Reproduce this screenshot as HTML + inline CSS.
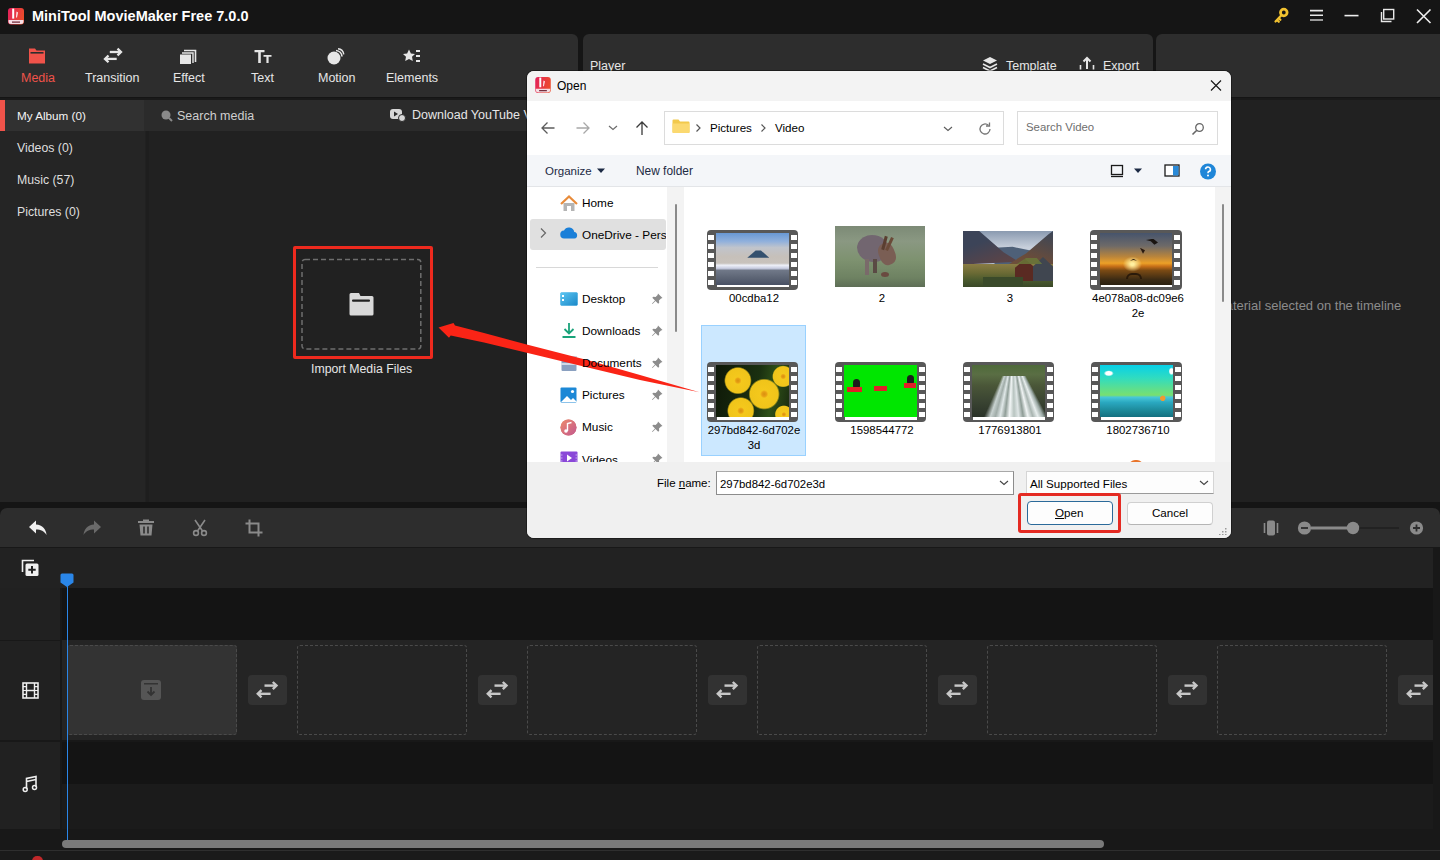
<!DOCTYPE html>
<html><head><meta charset="utf-8">
<style>
*{margin:0;padding:0;box-sizing:border-box}
html,body{width:1440px;height:860px;overflow:hidden;background:#151515;font-family:"Liberation Sans",sans-serif}
.a{position:absolute}
.t{position:absolute;white-space:nowrap;line-height:1}
svg{position:absolute;overflow:visible}
.tl{color:#e6e6e6;font-size:12.5px}
.clip{position:absolute;top:645px;width:170px;height:90px;border:1px dashed #4a4a4a;border-radius:3px}
.trb{position:absolute;top:675px;width:39.5px;height:29.5px;background:#323232;border-radius:4px}
.dt{position:absolute;white-space:nowrap;line-height:1;font-size:11.5px;color:#000}
.nav{position:absolute;left:582px;white-space:nowrap;line-height:1;font-size:11.8px;color:#000}
.film{position:absolute;width:91.5px;height:59.5px;background:#585858;border-radius:4px}
.film .img{position:absolute;left:9.7px;top:2.6px;width:72.5px;height:52px}
.film .wb{position:absolute;left:10.4px;top:54.7px;width:71.6px;height:2.6px;background:#fff}
.holes{position:absolute;top:4.5px;width:6px;height:50px;background:repeating-linear-gradient(#fff 0 4.8px,transparent 4.8px 9px)}
.lbl{position:absolute;width:110px;text-align:center;white-space:nowrap;line-height:15px;font-size:11.4px;color:#000}
</style></head><body>
<!-- TITLE BAR -->
<div class="a" style="left:0;top:0;width:1440px;height:34px;background:#151515"></div>
<svg style="left:8px;top:7.6px" width="16" height="16.5" viewBox="0 0 16 16.5">
<defs><linearGradient id="lg" x1="0" y1="0" x2="1" y2="0.3"><stop offset="0" stop-color="#e2205e"/><stop offset="1" stop-color="#ec4a2c"/></linearGradient></defs>
<rect x="0" y="0" width="16" height="16.5" rx="3" fill="url(#lg)"/>
<rect x="4.2" y="0.6" width="2" height="10" fill="#fff"/><path d="M8.5 3.5l1.5 1-1 5h-1z" fill="#fff" opacity=".9"/>
<path d="M0.5 12h15v1.5a2.5 2.5 0 0 1-2.5 2.5H3a2.5 2.5 0 0 1-2.5-2.5z" fill="#f4dde4"/><rect x="4" y="13.5" width="8" height="1.2" fill="#6a2030"/>
</svg>
<div class="t" style="left:32px;top:8.6px;font-size:14.5px;font-weight:bold;color:#fff">MiniTool MovieMaker Free 7.0.0</div>
<svg style="left:1272px;top:7px" width="18" height="18" viewBox="0 0 18 18">
<circle cx="11.8" cy="5.5" r="3.3" fill="none" stroke="#f2c230" stroke-width="2.8"/>
<path d="M9.6 8L3.5 14.5M5 13l1.8 1.8M6.8 11.2l1.6 1.6" stroke="#f2c230" stroke-width="2.2" stroke-linecap="round"/>
</svg>
<svg style="left:1308px;top:8px" width="18" height="16" viewBox="0 0 18 16">
<path d="M2 2.6h13M2 7.25h13" stroke="#e8e8e8" stroke-width="1.6"/><path d="M2 12h13" stroke="#bdbdbd" stroke-width="1.6"/>
</svg>
<svg style="left:1343px;top:8px" width="18" height="16" viewBox="0 0 18 16"><path d="M1.5 7.6h14" stroke="#eee" stroke-width="1.6"/></svg>
<svg style="left:1379px;top:7px" width="18" height="18" viewBox="0 0 18 18">
<rect x="4.7" y="2.5" width="10" height="9.5" fill="none" stroke="#e8e8e8" stroke-width="1.4"/>
<path d="M2.5 5v9.5h10" fill="none" stroke="#e8e8e8" stroke-width="1.4"/>
</svg>
<svg style="left:1415px;top:8px" width="18" height="18" viewBox="0 0 18 18"><path d="M2 1.5l13.5 13.5M15.5 1.5L2 15" stroke="#eee" stroke-width="1.6"/></svg>

<!-- TOOLBAR PANELS -->
<div class="a" style="left:0;top:34px;width:578px;height:63px;background:#2d2d2d;border-radius:0 6px 0 0"></div>
<div class="a" style="left:583px;top:34px;width:570px;height:63px;background:#2d2d2d;border-radius:6px 6px 0 0"></div>
<div class="a" style="left:1156px;top:34px;width:284px;height:63px;background:#2d2d2d;border-radius:6px 0 0 0"></div>
<div class="a" style="left:0;top:97.5px;width:1440px;height:2.5px;background:#1a1a1a"></div>

<!-- tab icons -->
<svg style="left:28px;top:47px" width="18" height="17" viewBox="0 0 18 17">
<path d="M1 1.5h6l1.5 2H17v13H1z" fill="#f0534a"/><rect x="2.5" y="5" width="13" height="1.6" fill="#2d2d2d"/>
</svg>
<svg style="left:100px;top:46px" width="24" height="20" viewBox="0 0 24 20">
<path d="M9.8 6H20.5" stroke="#e6e6e6" stroke-width="2.3"/><path d="M17.5 2.6L21 6l-3.5 3.4" fill="none" stroke="#e6e6e6" stroke-width="2.3"/>
<path d="M16.7 12.9H5.5" stroke="#e6e6e6" stroke-width="2.3"/><path d="M8.5 9.5L5 12.9l3.5 3.4" fill="none" stroke="#e6e6e6" stroke-width="2.3"/>
</svg>
<svg style="left:179px;top:47.5px" width="18" height="17" viewBox="0 0 18 17">
<path d="M5 2.5h11.5V14" fill="none" stroke="#e6e6e6" stroke-width="1.6"/>
<path d="M3 5h11v10" fill="none" stroke="#e6e6e6" stroke-width="1.4"/>
<rect x="1" y="6.5" width="11" height="9.5" fill="#e6e6e6"/>
</svg>
<svg style="left:254px;top:49px" width="18" height="15" viewBox="0 0 18 15"><path d="M0.5 1h10v2.2H6.8V14H4.2V3.2H0.5z" fill="#e6e6e6"/><path d="M9.5 6h8v1.8h-2.9V14h-2.2V7.8H9.5z" fill="#e6e6e6"/></svg>
<svg style="left:327px;top:48px" width="18" height="17" viewBox="0 0 18 17">
<circle cx="7" cy="10" r="6.5" fill="#e6e6e6"/>
<path d="M9 2.5a6.5 6.5 0 0 1 6 6" fill="none" stroke="#e6e6e6" stroke-width="1.6"/>
<path d="M11 0.8a6.5 6.5 0 0 1 5.8 5.5" fill="none" stroke="#e6e6e6" stroke-width="1.4"/>
</svg>
<svg style="left:402px;top:48px" width="20" height="16" viewBox="0 0 20 16">
<path d="M7 1.5l1.9 3.9 4.1.5-3 2.9.8 4.2L7 11l-3.8 2 .8-4.2-3-2.9 4.1-.5z" fill="#e6e6e6"/>
<path d="M14 3h4M14 8h4M14 13h4" stroke="#e6e6e6" stroke-width="1.8"/>
</svg>

<div class="t tl" style="left:21px;top:72px;color:#f0534a">Media</div>
<div class="t tl" style="left:85px;top:72px">Transition</div>
<div class="t tl" style="left:173px;top:72px">Effect</div>
<div class="t tl" style="left:251px;top:72px">Text</div>
<div class="t tl" style="left:318px;top:72px">Motion</div>
<div class="t tl" style="left:386px;top:72px">Elements</div>
<div class="t tl" style="left:590px;top:60px">Player</div>
<svg style="left:982px;top:56px" width="16" height="16" viewBox="0 0 16 16">
<path d="M8 1L15 4.5 8 8 1 4.5z" fill="#e6e6e6"/><path d="M1 8l7 3.5L15 8M1 11.5L8 15l7-3.5" fill="none" stroke="#e6e6e6" stroke-width="1.6"/>
</svg>
<div class="t tl" style="left:1006px;top:60px">Template</div>
<svg style="left:1079px;top:55px" width="16" height="16" viewBox="0 0 16 16">
<path d="M8 14V3M4.5 6.5L8 3l3.5 3.5" fill="none" stroke="#e6e6e6" stroke-width="2"/><path d="M1.5 10v4.5M14.5 10v4.5" stroke="#e6e6e6" stroke-width="1.6"/>
</svg>
<div class="t tl" style="left:1103px;top:60px">Export</div>

<!-- MEDIA LIBRARY -->
<div class="a" style="left:0;top:100px;width:145px;height:402px;background:#252525"></div>
<div class="a" style="left:0;top:100px;width:144px;height:31px;background:#313131"></div>
<div class="a" style="left:0;top:100px;width:5px;height:31px;background:#f0534a"></div>
<div class="a" style="left:145px;top:100px;width:433px;height:402px;background:#212121"></div>
<div class="a" style="left:144px;top:100px;width:434px;height:31px;background:#2b2b2b"></div>
<div class="a" style="left:146px;top:131px;width:3px;height:371px;background:#1e1e1e;opacity:.8"></div>
<div class="t" style="left:17px;top:110px;font-size:11.7px;color:#f4f4f4">My Album (0)</div>
<div class="t" style="left:17px;top:142px;font-size:12.3px;color:#dedede">Videos (0)</div>
<div class="t" style="left:17px;top:174px;font-size:12.3px;color:#dedede">Music (57)</div>
<div class="t" style="left:17px;top:206px;font-size:12.3px;color:#dedede">Pictures (0)</div>
<svg style="left:160px;top:109px" width="14" height="14" viewBox="0 0 14 14"><circle cx="6" cy="6" r="4.5" fill="#8a8a8a"/><path d="M9 9l3 3" stroke="#8a8a8a" stroke-width="2"/></svg>
<div class="t" style="left:177px;top:110px;font-size:12.5px;color:#cfcfcf">Search media</div>
<svg style="left:390px;top:108px" width="16" height="14" viewBox="0 0 16 14"><rect x="0" y="1" width="12" height="10" rx="3" fill="#d8d8d8"/><path d="M4 3.5l4 2.5-4 2.5z" fill="#2a2a2a"/><circle cx="12" cy="10" r="3.5" fill="#d8d8d8" stroke="#2a2a2a" stroke-width="1"/></svg>
<div class="t" style="left:412px;top:109px;font-size:12.5px;color:#e6e6e6">Download YouTube Videos</div>

<!-- import box -->
<div class="a" style="left:293px;top:246px;width:140px;height:113px;border:3px solid #ee2a1e;border-radius:2px"></div>
<svg style="left:300px;top:258px" width="124" height="94" viewBox="0 0 124 94"><rect x="2" y="1.5" width="118.8" height="89.6" rx="3" fill="none" stroke="#6e6e6e" stroke-width="1.5" stroke-dasharray="5 3"/></svg>
<svg style="left:348px;top:292px" width="26" height="25" viewBox="0 0 26 25">
<path d="M1.5 2.5a1.5 1.5 0 0 1 1.5-1.5h8l1.5 3H24a1.5 1.5 0 0 1 1.5 1.5V22a1.5 1.5 0 0 1-1.5 1.5H3A1.5 1.5 0 0 1 1.5 22z" fill="#d9d9d9"/>
<rect x="4" y="7.5" width="18" height="2.2" rx="1" fill="#222"/>
</svg>
<div class="t" style="left:311px;top:363px;font-size:12.3px;color:#e6e6e6">Import Media Files</div>

<!-- PLAYER AREA -->
<div class="a" style="left:578px;top:100px;width:862px;height:402px;background:#212121"></div>
<div class="t" style="left:1194.6px;top:299px;font-size:13px;color:#8c8c8c">No material selected on the timeline</div>

<!-- TIMELINE -->
<div class="a" style="left:0;top:502px;width:1440px;height:6px;background:#151515"></div>
<div class="a" style="left:0;top:508px;width:1440px;height:39px;background:#2d2d2d;border-radius:7px 7px 0 0"></div>
<div class="a" style="left:0;top:547px;width:1440px;height:313px;background:#181818"></div>
<!-- tl toolbar icons -->
<svg style="left:28px;top:519px" width="20" height="18" viewBox="0 0 20 18">
<path d="M8 1.5L1 8l7 6.5V10.5c5 0 8 1.5 10.5 5.5C18 10 14.5 6 8 5.5z" fill="#f0f0f0"/>
</svg>
<svg style="left:82px;top:519px" width="20" height="18" viewBox="0 0 20 18">
<path d="M12 1.5L19 8l-7 6.5V10.5c-5 0-8 1.5-10.5 5.5C2 10 5.5 6 12 5.5z" fill="#6a6a6a"/>
</svg>
<svg style="left:137px;top:519px" width="18" height="18" viewBox="0 0 18 18">
<rect x="1" y="2" width="16" height="2" fill="#8a8a8a"/><rect x="6" y="0.5" width="6" height="2" fill="#8a8a8a"/>
<path d="M2.5 5.5h13l-1 11h-11z" fill="#8a8a8a"/><path d="M7 7.5v7M11 7.5v7" stroke="#2d2d2d" stroke-width="1.6"/>
</svg>
<svg style="left:191px;top:519px" width="18" height="18" viewBox="0 0 18 18">
<path d="M4 1l7.5 11M14 1L6.5 12" stroke="#8a8a8a" stroke-width="1.6"/><circle cx="5" cy="14" r="2.4" fill="none" stroke="#8a8a8a" stroke-width="1.6"/><circle cx="13" cy="14" r="2.4" fill="none" stroke="#8a8a8a" stroke-width="1.6"/>
</svg>
<svg style="left:245px;top:519px" width="18" height="18" viewBox="0 0 18 18">
<path d="M4.5 0.5v13h13M0.5 4.5h13v13" fill="none" stroke="#8a8a8a" stroke-width="2"/>
</svg>
<!-- zoom -->
<svg style="left:1263px;top:519px" width="16" height="18" viewBox="0 0 16 18">
<rect x="4" y="1.5" width="8" height="15" rx="2" fill="#8a8a8a"/><path d="M1.5 4v10M14.5 4v10" stroke="#8a8a8a" stroke-width="1.6"/>
</svg>
<svg style="left:1296px;top:519px" width="130" height="18" viewBox="0 0 130 18">
<circle cx="8.5" cy="9" r="6.6" fill="#8a8a8a"/><path d="M5 9h7" stroke="#2d2d2d" stroke-width="1.8"/>
<path d="M15 9h42" stroke="#8a8a8a" stroke-width="3"/><path d="M57 9h46" stroke="#222" stroke-width="2"/>
<circle cx="57" cy="9" r="6.2" fill="#8a8a8a"/>
<circle cx="120.5" cy="9" r="6.6" fill="#8a8a8a"/><path d="M117 9h7M120.5 5.5v7" stroke="#2d2d2d" stroke-width="1.8"/>
</svg>

<!-- ruler row -->
<div class="a" style="left:0;top:548px;width:1433px;height:40px;background:#222"></div>
<svg style="left:21px;top:559px" width="19" height="18" viewBox="0 0 19 18">
<path d="M1.5 13V1.5H13" fill="none" stroke="#f0f0f0" stroke-width="1.6"/>
<rect x="4.5" y="4.5" width="13" height="12.5" rx="1.5" fill="#f0f0f0"/>
<path d="M11 7v7.5M7.3 10.75h7.4" stroke="#222" stroke-width="2"/>
</svg>
<!-- tracks -->
<div class="a" style="left:0;top:588px;width:60px;height:52px;background:#212121"></div>
<div class="a" style="left:62px;top:588px;width:1371px;height:52px;background:#141414"></div>
<div class="a" style="left:0;top:641px;width:60px;height:99px;background:#212121"></div>
<div class="a" style="left:62px;top:640px;width:1371px;height:100px;background:#242424"></div>
<div class="a" style="left:0;top:742px;width:60px;height:87px;background:#212121"></div>
<div class="a" style="left:62px;top:742px;width:1371px;height:42px;background:#141414"></div>
<div class="a" style="left:62px;top:784px;width:1371px;height:45px;background:#1b1b1b"></div>
<svg style="left:22px;top:682px" width="17" height="17" viewBox="0 0 17 17">
<rect x="1" y="1" width="15" height="15" fill="none" stroke="#eee" stroke-width="1.6"/>
<path d="M4.5 1v15M12.5 1v15M4.5 8.5h8" stroke="#eee" stroke-width="1.4"/>
<path d="M1 4.7h3.5M1 8.5h3.5M1 12.3h3.5M12.5 4.7H16M12.5 8.5H16M12.5 12.3H16" stroke="#eee" stroke-width="1.2"/>
</svg>
<svg style="left:22px;top:775px" width="16" height="18" viewBox="0 0 16 18">
<path d="M4.5 14V3.5L14 1.5V12M4.5 6.5L14 4.5" fill="none" stroke="#eee" stroke-width="1.6"/>
<circle cx="3.2" cy="14.5" r="2" fill="none" stroke="#eee" stroke-width="1.5"/><circle cx="12.5" cy="12.5" r="2" fill="none" stroke="#eee" stroke-width="1.5"/>
</svg>
<!-- clips -->
<div class="clip" style="left:67px;background:#333"></div>
<svg style="left:141px;top:680px" width="20" height="20" viewBox="0 0 20 20">
<rect x="0" y="0" width="20" height="20" rx="3" fill="#555"/><rect x="3" y="3" width="14" height="1.5" fill="#333"/>
<path d="M10 7v8M6.5 11.5L10 15l3.5-3.5" fill="none" stroke="#333" stroke-width="1.8"/>
</svg>
<div class="clip" style="left:297px"></div>
<div class="clip" style="left:527px"></div>
<div class="clip" style="left:757px"></div>
<div class="clip" style="left:987px"></div>
<div class="clip" style="left:1217px"></div>
<div class="trb" style="left:247.5px"></div><svg style="left:255.5px;top:679px" width="24" height="20" viewBox="0 0 24 20"><path d="M8.5 6.6H20" stroke="#c8c8c8" stroke-width="2.4"/><path d="M16.8 3L20.5 6.6l-3.7 3.6" fill="none" stroke="#c8c8c8" stroke-width="2.4"/><path d="M14.6 14.8H2.5" stroke="#c8c8c8" stroke-width="2.4"/><path d="M5.5 11.2L1.8 14.8l3.7 3.6" fill="none" stroke="#c8c8c8" stroke-width="2.4"/></svg>
<div class="trb" style="left:477.5px"></div><svg style="left:485.5px;top:679px" width="24" height="20" viewBox="0 0 24 20"><path d="M8.5 6.6H20" stroke="#c8c8c8" stroke-width="2.4"/><path d="M16.8 3L20.5 6.6l-3.7 3.6" fill="none" stroke="#c8c8c8" stroke-width="2.4"/><path d="M14.6 14.8H2.5" stroke="#c8c8c8" stroke-width="2.4"/><path d="M5.5 11.2L1.8 14.8l3.7 3.6" fill="none" stroke="#c8c8c8" stroke-width="2.4"/></svg>
<div class="trb" style="left:707.5px"></div><svg style="left:715.5px;top:679px" width="24" height="20" viewBox="0 0 24 20"><path d="M8.5 6.6H20" stroke="#c8c8c8" stroke-width="2.4"/><path d="M16.8 3L20.5 6.6l-3.7 3.6" fill="none" stroke="#c8c8c8" stroke-width="2.4"/><path d="M14.6 14.8H2.5" stroke="#c8c8c8" stroke-width="2.4"/><path d="M5.5 11.2L1.8 14.8l3.7 3.6" fill="none" stroke="#c8c8c8" stroke-width="2.4"/></svg>
<div class="trb" style="left:937.5px"></div><svg style="left:945.5px;top:679px" width="24" height="20" viewBox="0 0 24 20"><path d="M8.5 6.6H20" stroke="#c8c8c8" stroke-width="2.4"/><path d="M16.8 3L20.5 6.6l-3.7 3.6" fill="none" stroke="#c8c8c8" stroke-width="2.4"/><path d="M14.6 14.8H2.5" stroke="#c8c8c8" stroke-width="2.4"/><path d="M5.5 11.2L1.8 14.8l3.7 3.6" fill="none" stroke="#c8c8c8" stroke-width="2.4"/></svg>
<div class="trb" style="left:1167.5px"></div><svg style="left:1175.5px;top:679px" width="24" height="20" viewBox="0 0 24 20"><path d="M8.5 6.6H20" stroke="#c8c8c8" stroke-width="2.4"/><path d="M16.8 3L20.5 6.6l-3.7 3.6" fill="none" stroke="#c8c8c8" stroke-width="2.4"/><path d="M14.6 14.8H2.5" stroke="#c8c8c8" stroke-width="2.4"/><path d="M5.5 11.2L1.8 14.8l3.7 3.6" fill="none" stroke="#c8c8c8" stroke-width="2.4"/></svg>
<div class="trb" style="left:1397.5px"></div><svg style="left:1405.5px;top:679px" width="24" height="20" viewBox="0 0 24 20"><path d="M8.5 6.6H20" stroke="#c8c8c8" stroke-width="2.4"/><path d="M16.8 3L20.5 6.6l-3.7 3.6" fill="none" stroke="#c8c8c8" stroke-width="2.4"/><path d="M14.6 14.8H2.5" stroke="#c8c8c8" stroke-width="2.4"/><path d="M5.5 11.2L1.8 14.8l3.7 3.6" fill="none" stroke="#c8c8c8" stroke-width="2.4"/></svg>
<div class="a" style="left:1433px;top:548px;width:7px;height:290px;background:#181818"></div>
<!-- scrollbar -->
<div class="a" style="left:62px;top:840px;width:1042px;height:8px;background:#7a7a7a;border-radius:4px"></div>
<div class="a" style="left:0;top:850px;width:1440px;height:1px;background:#2e2e2e"></div>
<div class="a" style="left:0;top:851px;width:1440px;height:9px;background:#1a1a1a"></div>
<div class="a" style="left:32px;top:856px;width:11px;height:10px;border-radius:6px;background:#c0282a"></div>
<!-- playhead -->
<div class="a" style="left:66.6px;top:580px;width:1.3px;height:260px;background:#2a86e8"></div>
<svg style="left:60px;top:573px" width="15" height="15" viewBox="0 0 15 15"><path d="M0.5 2a1.5 1.5 0 0 1 1.5-1.5h10A1.5 1.5 0 0 1 13.5 2V9.5L7 14 0.5 9.5z" fill="#2a86e8"/></svg>
<!-- ============ DIALOG ============ -->
<div class="a" style="left:526px;top:70px;width:706px;height:469px;border-radius:8px;background:rgba(0,0,0,.35)"></div>
<div class="a" style="left:527px;top:71px;width:704px;height:467px;background:#f0f0f0;border-radius:7px;overflow:hidden">
</div>
<div class="a" style="left:527px;top:71px;width:704px;height:30px;background:#f3f3f3;border-radius:7px 7px 0 0"></div>
<svg style="left:535px;top:76.8px" width="16" height="16" viewBox="0 0 16 16.5">
<rect x="0" y="0" width="16" height="16.5" rx="3" fill="url(#lg)"/>
<rect x="4.2" y="0.6" width="2" height="10" fill="#fff"/><path d="M8.5 3.5l1.5 1-1 5h-1z" fill="#fff" opacity=".9"/>
<path d="M0.5 12h15v1.5a2.5 2.5 0 0 1-2.5 2.5H3a2.5 2.5 0 0 1-2.5-2.5z" fill="#f4dde4"/><rect x="4" y="13.5" width="8" height="1.2" fill="#6a2030"/>
</svg>
<div class="dt" style="left:557px;top:79.6px;font-size:12px">Open</div>
<svg style="left:1209px;top:78px" width="14" height="14" viewBox="0 0 14 14"><path d="M2 2.5l10 10M12 2.5l-10 10" stroke="#1a1a1a" stroke-width="1.2"/></svg>

<!-- address row -->
<div class="a" style="left:527px;top:101px;width:704px;height:54px;background:#fff"></div>
<svg style="left:540px;top:120px" width="16" height="16" viewBox="0 0 16 16"><path d="M14.5 8H2M7.5 2.5L2 8l5.5 5.5" fill="none" stroke="#5c5c5c" stroke-width="1.3"/></svg>
<svg style="left:575px;top:120px" width="16" height="16" viewBox="0 0 16 16"><path d="M1.5 8H14M8.5 2.5L14 8l-5.5 5.5" fill="none" stroke="#a8a8a8" stroke-width="1.3"/></svg>
<svg style="left:607px;top:123px" width="12" height="10" viewBox="0 0 12 10"><path d="M2 3l4 3.5L10 3" fill="none" stroke="#6c6c6c" stroke-width="1.2"/></svg>
<svg style="left:634px;top:120px" width="16" height="16" viewBox="0 0 16 16"><path d="M8 15V2M2.5 7.5L8 2l5.5 5.5" fill="none" stroke="#3a3a3a" stroke-width="1.3"/></svg>
<div class="a" style="left:664px;top:111px;width:340px;height:34px;border:1px solid #dcdcdc;background:#fff"></div>
<svg style="left:672px;top:119px" width="18" height="15" viewBox="0 0 18 15">
<path d="M0.5 1.5a1 1 0 0 1 1-1h5l1.5 2h8.5a1 1 0 0 1 1 1V13a1 1 0 0 1-1 1h-15a1 1 0 0 1-1-1z" fill="#f2c94c"/>
<path d="M0.5 4.5h17V13a1 1 0 0 1-1 1h-15a1 1 0 0 1-1-1z" fill="#fbd970"/>
</svg>
<svg style="left:694px;top:123px" width="8" height="10" viewBox="0 0 8 10"><path d="M2.5 1.5L6 5l-3.5 3.5" fill="none" stroke="#555" stroke-width="1.2"/></svg>
<div class="dt" style="left:710px;top:121.8px;font-size:11.6px">Pictures</div>
<svg style="left:759px;top:123px" width="8" height="10" viewBox="0 0 8 10"><path d="M2.5 1.5L6 5l-3.5 3.5" fill="none" stroke="#555" stroke-width="1.2"/></svg>
<div class="dt" style="left:775px;top:121.8px;font-size:11.6px">Video</div>
<svg style="left:942px;top:124px" width="12" height="10" viewBox="0 0 12 10"><path d="M2 3l4 3.5L10 3" fill="none" stroke="#5c5c5c" stroke-width="1.1"/></svg>
<svg style="left:977px;top:121px" width="16" height="16" viewBox="0 0 16 16"><path d="M13 8a5 5 0 1 1-1.6-3.7" fill="none" stroke="#777" stroke-width="1.3"/><path d="M12.5 1.5v3.5H9" fill="none" stroke="#777" stroke-width="1.3"/></svg>
<div class="a" style="left:1017px;top:111px;width:201px;height:34px;border:1px solid #dcdcdc;background:#fff"></div>
<div class="dt" style="left:1026px;top:122.3px;font-size:11.4px;color:#6e6e6e">Search Video</div>
<svg style="left:1191px;top:122px" width="14" height="14" viewBox="0 0 14 14"><circle cx="8.5" cy="5.5" r="3.8" fill="none" stroke="#666" stroke-width="1.3"/><path d="M5.8 8.2L1.5 12.5" stroke="#666" stroke-width="1.6"/></svg>

<!-- command bar -->
<div class="a" style="left:527px;top:155px;width:704px;height:31px;background:#f4f6f9"></div>
<div class="a" style="left:527px;top:186px;width:704px;height:1px;background:#e3e5e8"></div>
<div class="dt" style="left:545px;top:165.8px;font-size:11.5px;color:#1c2a44">Organize</div>
<svg style="left:596px;top:167px" width="10" height="8" viewBox="0 0 10 8"><path d="M1 1.5h8L5 6z" fill="#1c2a44"/></svg>
<div class="dt" style="left:636px;top:165.8px;font-size:11.9px;color:#1c2a44">New folder</div>
<svg style="left:1110px;top:164px" width="16" height="14" viewBox="0 0 16 14"><rect x="1.5" y="1.5" width="11" height="9" fill="none" stroke="#1a1a1a" stroke-width="1.3"/><path d="M1 12.5h12" stroke="#1a1a1a" stroke-width="1.3"/></svg>
<svg style="left:1133px;top:167px" width="10" height="8" viewBox="0 0 10 8"><path d="M1 1.5h8L5 6z" fill="#1c2a44"/></svg>
<svg style="left:1164px;top:164px" width="16" height="14" viewBox="0 0 16 14"><rect x="1" y="1" width="14" height="11" fill="#fff" stroke="#1a1a1a" stroke-width="1.3"/><rect x="9" y="2" width="5.5" height="9.5" fill="#2a8ad8"/></svg>
<svg style="left:1199px;top:163px" width="18" height="18" viewBox="0 0 18 18"><circle cx="9" cy="8.5" r="8" fill="#1f86d8"/><path d="M6.6 6.3a2.4 2.4 0 1 1 3.2 2.3c-.7.3-.8.7-.8 1.6" fill="none" stroke="#fff" stroke-width="1.6"/><circle cx="9" cy="12.6" r="1" fill="#fff"/></svg>

<!-- nav pane -->
<div class="a" style="left:527px;top:187px;width:140px;height:275px;background:#fff"></div>
<div class="a" style="left:667px;top:187px;width:17px;height:275px;background:#f3f3f3"></div>
<div class="a" style="left:674.5px;top:204px;width:2px;height:128px;background:#8a8a8a;border-radius:1px"></div>
<div class="a" style="left:529.5px;top:219px;width:136px;height:31px;background:#e0e0e0;border-radius:3px"></div>
<svg style="left:539px;top:227px" width="8" height="12" viewBox="0 0 8 12"><path d="M2 1.5L6.5 6 2 10.5" fill="none" stroke="#666" stroke-width="1.2"/></svg>
<div class="a" style="left:536px;top:267px;width:122px;height:1px;background:#d8d8d8"></div>
<div class="a" style="left:684px;top:187px;width:531px;height:275px;background:#fff"></div>

<!-- nav icons -->
<svg style="left:560px;top:195px" width="18" height="17" viewBox="0 0 18 17">
<path d="M3.5 8v8h11V8" fill="#b4b4b4"/><path d="M1 9L9 1.5 17 9" fill="none" stroke="#e88b3a" stroke-width="2.2"/>
<rect x="7" y="11" width="4" height="5" fill="#fff"/>
</svg>
<svg style="left:560px;top:226px" width="18" height="13" viewBox="0 0 18 13">
<path d="M4.5 12.5a4 4 0 0 1-.5-8 5.5 5.5 0 0 1 10.3 1.5 3.3 3.3 0 0 1 .2 6.5z" fill="#1a7fd8"/>
</svg>
<svg style="left:560px;top:292px" width="18" height="14" viewBox="0 0 18 14">
<rect x="0.5" y="0.5" width="17" height="13" rx="1" fill="#2ea6e0"/><rect x="0.5" y="0.5" width="17" height="13" rx="1" fill="url(#dg)"/>
<defs><linearGradient id="dg" x1="0" y1="0" x2="1" y2="1"><stop offset="0" stop-color="#5cc6f2"/><stop offset="1" stop-color="#1a88c8"/></linearGradient></defs>
<rect x="2" y="3" width="2" height="2" fill="#fff"/><rect x="2" y="7" width="2" height="2" fill="#fff"/>
</svg>
<svg style="left:560px;top:322px" width="18" height="17" viewBox="0 0 18 17">
<path d="M9 1v10M4.5 7L9 11.5 13.5 7" fill="none" stroke="#1aa37a" stroke-width="1.8"/><path d="M2.5 15h13" stroke="#1aa37a" stroke-width="2"/>
</svg>
<svg style="left:561px;top:355px" width="16" height="17" viewBox="0 0 16 17">
<rect x="0.5" y="1" width="15" height="15" rx="1" fill="#8aa0c0"/><rect x="0.5" y="1" width="15" height="5" fill="#c8d2e0"/><path d="M0.5 9h15" stroke="#fff" stroke-width="1.2"/>
</svg>
<svg style="left:560px;top:387px" width="18" height="16" viewBox="0 0 18 16">
<rect x="0.5" y="0.5" width="16" height="15" rx="1" fill="#1c88d6"/><path d="M1 15l6-6 4 4 2-2 4 4z" fill="#fff"/><circle cx="12.5" cy="4.5" r="1.6" fill="#fff"/>
</svg>
<svg style="left:560px;top:419px" width="17" height="17" viewBox="0 0 17 17">
<circle cx="8.5" cy="8.5" r="8" fill="#d9786a"/><circle cx="8.5" cy="8.5" r="8" fill="url(#mg)"/>
<defs><linearGradient id="mg" x1="0" y1="0" x2="1" y2="1"><stop offset="0" stop-color="#ee8a6a"/><stop offset="1" stop-color="#c25890"/></linearGradient></defs>
<path d="M7.5 12V4.5l4-1" fill="none" stroke="#fff" stroke-width="1.4"/><circle cx="6" cy="12" r="1.8" fill="#fff"/>
</svg>
<svg style="left:560px;top:451px" width="18" height="14" viewBox="0 0 18 14">
<rect x="0.5" y="0.5" width="17" height="13" rx="1" fill="#8a48d8"/><path d="M7 3.5l5 3.5-5 3.5z" fill="#fff"/>
<path d="M0.5 4h2M0.5 7h2M0.5 10h2M15.5 4h2M15.5 7h2M15.5 10h2" stroke="#c8a8f0" stroke-width="1.2"/>
</svg>
<!-- ARROW -->
<svg style="left:0;top:0" width="1440" height="860" viewBox="0 0 1440 860">
<path d="M438.5 327.6 L453.5 323 L455 325.5 L484 333.1 L526.7 344.4 L590 360.8 L640 375 L699.5 392.2 L640 380 L590 367.9 L526.7 352.8 L484 342.6 L450.7 335.6 L449 337.7 Z" fill="#fa2416"/>
</svg>
<div class="nav" style="top:197.5px">Home</div>
<div class="nav" style="top:229.5px;width:84px;overflow:hidden">OneDrive - Personal</div>
<div class="nav" style="top:293.5px">Desktop</div>
<div class="nav" style="top:325.5px">Downloads</div>
<div class="nav" style="top:357.5px">Documents</div>
<div class="nav" style="top:389.5px">Pictures</div>
<div class="nav" style="top:421.5px">Music</div>
<div class="nav" style="top:454.5px">Videos</div>
<svg style="left:651px;top:292px" width="13" height="13" viewBox="0 0 13 13"><path d="M7 1.5l4.5 4.5-1.5.5-2 2 .2 2.3-1 1L4.5 9 1.5 12 1 11.5 4 8.5 1.3 5.8l1-1 2.3.2 2-2z" fill="#8c8c8c"/></svg>
<svg style="left:651px;top:324px" width="13" height="13" viewBox="0 0 13 13"><path d="M7 1.5l4.5 4.5-1.5.5-2 2 .2 2.3-1 1L4.5 9 1.5 12 1 11.5 4 8.5 1.3 5.8l1-1 2.3.2 2-2z" fill="#8c8c8c"/></svg>
<svg style="left:651px;top:356px" width="13" height="13" viewBox="0 0 13 13"><path d="M7 1.5l4.5 4.5-1.5.5-2 2 .2 2.3-1 1L4.5 9 1.5 12 1 11.5 4 8.5 1.3 5.8l1-1 2.3.2 2-2z" fill="#8c8c8c"/></svg>
<svg style="left:651px;top:388px" width="13" height="13" viewBox="0 0 13 13"><path d="M7 1.5l4.5 4.5-1.5.5-2 2 .2 2.3-1 1L4.5 9 1.5 12 1 11.5 4 8.5 1.3 5.8l1-1 2.3.2 2-2z" fill="#8c8c8c"/></svg>
<svg style="left:651px;top:420px" width="13" height="13" viewBox="0 0 13 13"><path d="M7 1.5l4.5 4.5-1.5.5-2 2 .2 2.3-1 1L4.5 9 1.5 12 1 11.5 4 8.5 1.3 5.8l1-1 2.3.2 2-2z" fill="#8c8c8c"/></svg>
<svg style="left:651px;top:452px" width="13" height="13" viewBox="0 0 13 13"><path d="M7 1.5l4.5 4.5-1.5.5-2 2 .2 2.3-1 1L4.5 9 1.5 12 1 11.5 4 8.5 1.3 5.8l1-1 2.3.2 2-2z" fill="#8c8c8c"/></svg>


<!-- content -->
<div class="a" style="left:684px;top:187px;width:531px;height:275px;overflow:hidden">
<div class="a" style="left:17px;top:138px;width:105px;height:131px;background:#cce8ff;border:1px solid #99d1ff"></div>
<div class="film" style="left:22.6px;top:43.2px"><div class="holes" style="left:1.2px"></div><div class="holes" style="left:84.2px"></div><div class="img" style="background:linear-gradient(#6898d4 0%,#90b0dc 16%,#c0c4cc 28%,#c6c0ba 45%,#c8c2bc 58%,#eef0f8 62%,#c8cce0 68%,#707888 72%,#5e6676 85%,#485064 100%)"><div class="a" style="left:31px;top:17px;width:22px;height:8px;background:#34506e;clip-path:polygon(0 100%,38% 8%,62% 8%,100% 100%)"></div></div><div class="wb"></div></div>
<div class="a" style="left:151.3px;top:39px;width:89.5px;height:60.7px;overflow:hidden;background:linear-gradient(#7c8a76 0%,#8a9882 25%,#7e9270 55%,#6e8262 85%,#5e6e56)"><div class="a" style="left:22px;top:9px;width:32px;height:27px;border-radius:50%;background:#726670;transform:rotate(10deg)"></div><div class="a" style="left:44px;top:17px;width:16px;height:22px;border-radius:40%;background:#7a5e54;transform:rotate(-20deg)"></div><div class="a" style="left:48px;top:10px;width:3px;height:14px;background:#5a3e30;transform:rotate(15deg)"></div><div class="a" style="left:53px;top:11px;width:3px;height:14px;background:#6a4a38;transform:rotate(25deg)"></div><div class="a" style="left:30px;top:33px;width:4px;height:16px;background:#7a6a6a"></div><div class="a" style="left:38px;top:33px;width:4px;height:14px;background:#5a4a44"></div><div class="a" style="left:46px;top:46px;width:8px;height:5px;border-radius:50%;background:#6a4a40"></div></div>
<div class="a" style="left:279px;top:44px;width:90px;height:56px;overflow:hidden;background:linear-gradient(#8a9ab0,#c8d0dc 30%,#b0bccc 50%)"><div class="a" style="left:0;top:0;width:90px;height:56px;background:#4e6078;clip-path:polygon(35% 30%,55% 28%,75% 35%,75% 60%,35% 60%)"></div><div class="a" style="left:0;top:0;width:90px;height:56px;background:linear-gradient(160deg,#3c4458 20%,#5a4448 50%,#6a4a3e);clip-path:polygon(0 0,18% 0,45% 38%,62% 55%,0 60%)"></div><div class="a" style="left:0;top:0;width:90px;height:56px;background:linear-gradient(200deg,#3a4658,#6a4c3a 40%,#7a5a3a);clip-path:polygon(100% 0,100% 65%,48% 62%,70% 40%,95% 6%)"></div><div class="a" style="left:0;top:33px;width:90px;height:23px;background:linear-gradient(#8a7c44,#6a6a34 40%,#4a5a2e 70%,#3a4828)"></div><div class="a" style="left:52px;top:28px;width:20px;height:22px;background:#5a2a22;clip-path:polygon(0 40%,50% 0,100% 40%,100% 100%,0 100%)"></div><div class="a" style="left:70px;top:26px;width:20px;height:24px;background:#404650;clip-path:polygon(0 40%,50% 0,100% 40%,100% 100%,0 100%)"></div><div class="a" style="left:54px;top:27px;width:36px;height:6px;background:#6a7a3a;opacity:.8;clip-path:polygon(0 100%,25% 0,55% 0,70% 100%)"></div><div class="a" style="left:20px;top:46px;width:40px;height:10px;background:#3a4a2a"></div></div>
<div class="film" style="left:406.3px;top:43.2px"><div class="holes" style="left:1.2px"></div><div class="holes" style="left:84.2px"></div><div class="img" style="background:radial-gradient(ellipse 10px 8px at 45% 60%,#fff0a0 15%,transparent 95%),linear-gradient(#46546c 0%,#6e6a68 25%,#b8843c 45%,#eca028 58%,#c87018 64%,#7a4a14 72%,#3a2a14 90%,#2a2010 100%)"><div class="a" style="left:46px;top:6px;width:12px;height:6px;background:#1a1410;clip-path:polygon(0 20%,60% 0,100% 60%,70% 100%,40% 40%)"></div><div class="a" style="left:40px;top:15px;width:5px;height:6px;background:#2a1a10;clip-path:polygon(0 0,100% 40%,60% 100%)"></div><div class="a" style="left:30px;top:26px;width:7px;height:4px;background:#3a2a14;clip-path:polygon(0 50%,50% 0,100% 50%,50% 30%)"></div><div class="a" style="left:26px;top:40px;width:16px;height:6px;border-radius:8px 8px 0 0;border:2px solid #2a1a0a;border-bottom:0"></div></div><div class="wb"></div></div>
<div class="film" style="left:22.6px;top:175.3px"><div class="holes" style="left:1.2px"></div><div class="holes" style="left:84.2px"></div><div class="img" style="background:radial-gradient(circle 15px at 30% 30%,#d89010 0,#e8a014 14%,#f4c81c 24%,#f0c41a 82%,transparent 92%),radial-gradient(circle 17px at 66% 56%,#d89010 0,#e8a014 14%,#f4c81c 24%,#f0c41a 82%,transparent 92%),radial-gradient(circle 15px at 34% 88%,#d89010 0,#e8a014 14%,#f4c81c 24%,#f0c41a 82%,transparent 92%),radial-gradient(circle 12px at 92% 22%,#d89010 0,#e8a014 14%,#f4c81c 24%,#f0c41a 82%,transparent 92%),radial-gradient(circle 10px at 93% 95%,#d89010 0,#e8a014 14%,#f4c81c 24%,#f0c41a 82%,transparent 92%),linear-gradient(100deg,#0e1808,#1a3010 55%,#2e5018 75%,#1a2a10)"></div><div class="wb"></div></div>
<div class="film" style="left:150.6px;top:175.3px"><div class="holes" style="left:1.2px"></div><div class="holes" style="left:84.2px"></div><div class="img" style="background:#00e600"><div class="a" style="left:9px;top:14px;width:7px;height:8px;border-radius:4px 4px 1px 1px;background:#1c1c1c"></div><div class="a" style="left:3px;top:22px;width:15px;height:5px;background:#e02028"></div><div class="a" style="left:30px;top:21.5px;width:13px;height:4.5px;background:#e02028"></div><div class="a" style="left:63px;top:10px;width:7px;height:8px;border-radius:4px 4px 1px 1px;background:#1c1c1c"></div><div class="a" style="left:60px;top:18.5px;width:12px;height:4.5px;background:#e02028"></div></div><div class="wb"></div></div>
<div class="film" style="left:278.6px;top:175.3px"><div class="holes" style="left:1.2px"></div><div class="holes" style="left:84.2px"></div><div class="img" style="background:conic-gradient(from 152deg at 56% -60%,transparent 0deg,#9aa8a4 3deg,#e8eeee 7deg,#a8b4b0 11deg,#f0f4f4 15deg,#8e9c96 19deg,#dfe6e6 23deg,#b8c4c0 27deg,#f2f6f6 31deg,#909e98 35deg,#e0e8e8 39deg,#a0aca8 43deg,#c8d2d0 47deg,transparent 52deg) 0 11px/100% 41px no-repeat,linear-gradient(#4e6a3a 0%,#5a6e44 18%,#4a5638 40%,#3a4432 70%,#2a3228 100%)"></div><div class="wb"></div></div>
<div class="film" style="left:406.6px;top:175.3px"><div class="holes" style="left:1.2px"></div><div class="holes" style="left:84.2px"></div><div class="img" style="background:radial-gradient(ellipse 3px 3px at 86% 64%,#f09a30 80%,transparent 100%),radial-gradient(ellipse 5px 3px at 12% 16%,#ffffff 60%,transparent 100%),radial-gradient(ellipse 3px 4px at 98% 12%,#ffffff 60%,transparent 100%),linear-gradient(#08d0e8 0%,#30dcc0 25%,#78e070 58%,#48c8d8 62%,#2aa8c0 72%,#1c8898 88%,#147080 100%)"></div><div class="wb"></div></div>
<div class="lbl" style="left:15px;top:104.4px">00cdba12</div>
<div class="lbl" style="left:143px;top:104.4px">2</div>
<div class="lbl" style="left:271px;top:104.4px">3</div>
<div class="lbl" style="left:399px;top:104.4px">4e078a08-dc09e6<br>2e</div>
<div class="lbl" style="left:15px;top:235.9px">297bd842-6d702e<br>3d</div>
<div class="lbl" style="left:143px;top:235.9px">1598544772</div>
<div class="lbl" style="left:271px;top:235.9px">1776913801</div>
<div class="lbl" style="left:399px;top:235.9px">1802736710</div>
<div class="a" style="left:445px;top:273px;width:14px;height:6px;border-radius:7px 7px 0 0;background:#e8742a"></div>
</div>
<div class="a" style="left:1215px;top:187px;width:16px;height:275px;background:#f3f3f3"></div>
<div class="a" style="left:1221.5px;top:204px;width:2px;height:98px;background:#8a8a8a;border-radius:1px"></div>

<div class="a" style="left:527px;top:462px;width:704px;height:76px;background:#f0f0f0;border-radius:0 0 7px 7px"></div>
<!-- bottom -->
<div class="dt" style="left:657px;top:478px">File <u>n</u>ame:</div>
<div class="a" style="left:716px;top:471px;width:298px;height:24px;background:#fff;border:1px solid #8c8c8c;border-top-color:#a8a8a8"></div>
<div class="dt" style="left:720px;top:479px;font-size:11.4px">297bd842-6d702e3d</div>
<svg style="left:998px;top:478px" width="12" height="10" viewBox="0 0 12 10"><path d="M2 3l4 3.5L10 3" fill="none" stroke="#444" stroke-width="1.1"/></svg>
<div class="a" style="left:1026px;top:471px;width:188px;height:23px;background:#fdfdfd;border:1px solid #d5d5d5;border-bottom-color:#9a9a9a"></div>
<div class="dt" style="left:1030px;top:477.5px;font-size:11.6px">All Supported Files</div>
<svg style="left:1198px;top:478px" width="12" height="10" viewBox="0 0 12 10"><path d="M2 3l4 3.5L10 3" fill="none" stroke="#444" stroke-width="1.1"/></svg>
<div class="a" style="left:1018px;top:492.5px;width:103px;height:40.5px;border:3px solid #e42a22;border-radius:3px"></div>
<div class="a" style="left:1027px;top:501px;width:86px;height:24px;background:#fdfdfd;border:1px solid #2b6a9a;border-radius:4px"></div>
<div class="dt" style="left:1055px;top:506.5px;font-size:11.6px"><u>O</u>pen</div>
<div class="a" style="left:1127px;top:502px;width:86px;height:23px;background:#fdfdfd;border:1px solid #d0d0d0;border-bottom-color:#b5b5b5;border-radius:4px"></div>
<div class="dt" style="left:1152px;top:506.5px;font-size:11.6px">Cancel</div>
<svg style="left:1218px;top:527px" width="10" height="8" viewBox="0 0 10 8"><path d="M7 1h1.5v1.5H7zM4 4h1.5v1.5H4zM7 4h1.5v1.5H7zM1 7h1.5v1H1zM4 7h1.5v1H4zM7 7h1.5v1H7z" fill="#9a9a9a"/></svg>



</body></html>
